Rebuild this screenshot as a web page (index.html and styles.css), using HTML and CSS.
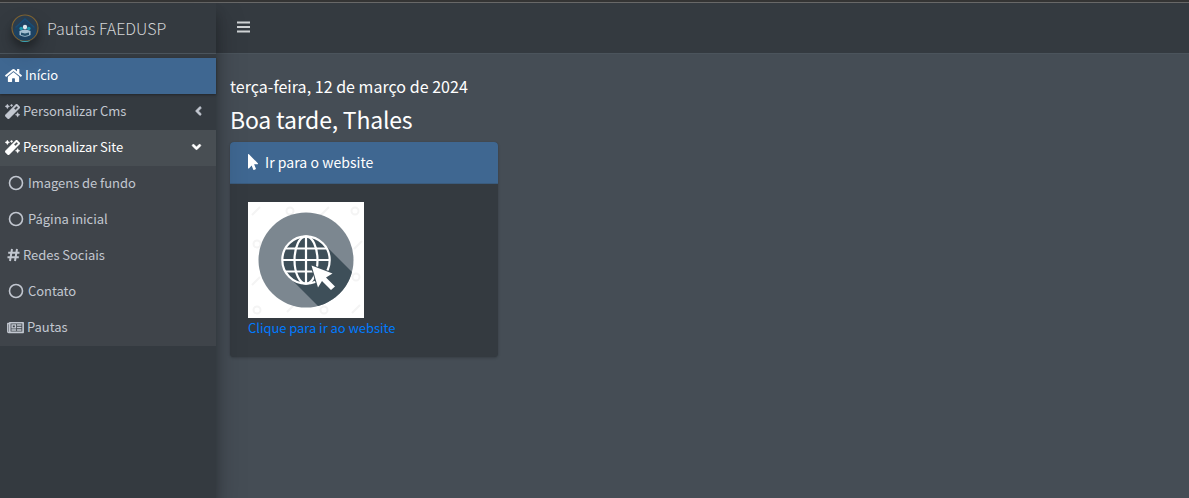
FILE: index.html
```html
<!DOCTYPE html>
<html lang="pt-br">
<head>
<meta charset="utf-8">
<title>Pautas FAEDUSP</title>
<link rel="stylesheet" href="styles.css">
</head>
<body>
<svg class="defs" width="0" height="0">
  <symbol id="magic" viewBox="0 0 512 512"><path d="M224 96l16-32 32-16-32-16-16-32-16 32-32 16 32 16 16 32zM80 160l26.66-53.33L160 80l-53.34-26.67L80 0 53.34 53.33 0 80l53.34 26.67L80 160zm352 128l-26.66 53.33L352 368l53.34 26.67L432 448l26.66-53.33L512 368l-53.34-26.67L432 288zm70.62-193.77L417.77 9.38C411.53 3.12 403.34 0 395.15 0c-8.19 0-16.38 3.12-22.63 9.38L9.38 372.52c-12.5 12.5-12.5 32.76 0 45.25l84.85 84.85c6.25 6.25 14.44 9.37 22.62 9.37 8.19 0 16.38-3.12 22.63-9.37l363.14-363.15c12.5-12.48 12.5-32.75 0-45.24zM359.45 203.46l-50.91-50.91 86.6-86.6 50.91 50.91-86.6 86.6z"/></symbol>
  <symbol id="angle" viewBox="0 0 256 512"><path d="M31.7 239l136-136c9.4-9.4 24.6-9.4 33.9 0l22.6 22.6c9.4 9.4 9.4 24.6 0 33.9L127.9 256l96.4 96.4c9.4 9.4 9.4 24.6 0 33.9L201.7 409c-9.4 9.4-24.6 9.4-33.9 0l-136-136c-9.5-9.4-9.5-24.6-.1-34z"/></symbol>
  <symbol id="circle" viewBox="0 0 16 16"><circle cx="8" cy="8" r="6.500" fill="none" stroke="currentColor" stroke-width="1.600"/></symbol>
</svg>
<div class="wrapper">
  <aside class="sidebar">
    <a class="brand">
      <svg class="brand-logo" viewBox="0 0 28 28">
        <circle cx="14" cy="14" r="13" fill="#2b3d4e" stroke="#80632f" stroke-width="1.100"/>
        <path d="M3 15L14 4l11 11v5a12.500 12.500 0 0 1-22 0z" fill="#1d4262"/>
        <path d="M4.500 13.500L14 5l9.500 8.500" fill="none" stroke="#184d75" stroke-width="1.500"/>
        <circle cx="10.200" cy="14.500" r="1.800" fill="#1d9bb0"/><circle cx="17.800" cy="14.500" r="1.800" fill="#1d9bb0"/>
        <circle cx="14" cy="13" r="2.200" fill="#dce8ee"/>
        <path d="M8.500 17q5.500-3 11 0v4q-5.500 3.500-11 0z" fill="#a5c0d2"/>
        <path d="M10 18.500l4 1 4-1v2.500l-4 1-4-1z" fill="#27536f"/>
        <path d="M9 27q5 1.300 10 0" fill="none" stroke="#39a6b5" stroke-width="1.200"/>
      </svg>
      <span class="brand-text">Pautas FAEDUSP</span>
    </a>
    <nav class="menu">
      <a class="item active"><svg class="ico home" viewBox="0 0 576 512"><path d="M280.37 148.26L96 300.11V464a16 16 0 0 0 16 16l112.06-.29a16 16 0 0 0 15.92-16V368a16 16 0 0 1 16-16h64a16 16 0 0 1 16 16v95.64a16 16 0 0 0 16 16.05L464 480a16 16 0 0 0 16-16V300L295.67 148.26a12.19 12.19 0 0 0-15.3 0zM571.6 251.47L488 182.56V44.05a12 12 0 0 0-12-12h-56a12 12 0 0 0-12 12v72.61L318.47 43a48 48 0 0 0-61 0L4.34 251.47a12 12 0 0 0-1.6 16.9l25.5 31A12 12 0 0 0 45.15 301l235.22-193.74a12.19 12.19 0 0 1 15.3 0L530.9 301a12 12 0 0 0 16.9-1.6l25.5-31a12 12 0 0 0-1.7-16.93z"/></svg><span class="label">Início</span></a>
      <a class="item"><svg class="ico magic"><use href="#magic"/></svg><span class="label">Personalizar Cms</span><svg class="angle"><use href="#angle"/></svg></a>
      <a class="item open"><svg class="ico magic"><use href="#magic"/></svg><span class="label">Personalizar Site</span><svg class="angle down"><use href="#angle"/></svg></a>
      <div class="tree">
        <a class="item"><svg class="ico circle"><use href="#circle"/></svg><span class="label">Imagens de fundo</span></a>
        <a class="item"><svg class="ico circle"><use href="#circle"/></svg><span class="label">Página inicial</span></a>
        <a class="item"><svg class="ico hash" viewBox="0 0 13 14"><path d="M5 1L3 13M10 1L8 13M1.200 4.700h11.300M.5 9.300h11.300" fill="none" stroke="currentColor" stroke-width="2"/></svg><span class="label">Redes Sociais</span></a>
        <a class="item"><svg class="ico circle"><use href="#circle"/></svg><span class="label">Contato</span></a>
        <a class="item"><svg class="ico news" viewBox="0 0 576 512"><path fill-rule="evenodd" d="M552 64H88c-13 0-24 11-24 32H24C11 96 0 107 0 120v272c0 31 25 56 56 56h496c13 0 24-11 24-24V88c0-13-11-24-24-24zM48 392V144h16v248c0 10-16 10-16 0zm72 0V120h400v272zM148 144h164v144H148zm48 40v60h68v-60zM148 316h164v52H148zM340 144h152v52H340zm0 86h152v52H340zm0 86h152v52H340z"/></svg><span class="label">Pautas</span></a>
      </div>
    </nav>
  </aside>
  <div class="main">
    <header class="navbar"><svg class="bars" viewBox="0 0 13 12"><path d="M.5 1.500h12M.5 6h12M.5 10.500h12" stroke="currentColor" stroke-width="2.200" stroke-linecap="round"/></svg></header>
    <main class="content">
      <h5 class="date">terça-feira, 12 de março de 2024</h5>
      <h3 class="greeting">Boa tarde, Thales</h3>
      <section class="card">
        <div class="card-header"><svg class="pointer" viewBox="0 0 320 512"><path d="M302.189 329.126H196.105l55.831 135.993c3.889 9.428-.555 19.999-9.444 23.999l-49.165 21.427c-9.165 4-19.443-.571-23.332-9.714l-53.053-129.136-86.664 89.138C18.729 472.71 0 463.554 0 447.977V18.299C0 1.899 19.921-6.096 30.277 5.443l284.412 292.542c11.472 11.179 3.007 31.141-12.5 31.141z"/></svg><span class="label">Ir para o website</span></div>
        <div class="card-body">
          <svg class="globe" viewBox="0 0 116 116">
            <rect width="116" height="116" fill="#fff"/>
            <g fill="none" stroke="#f4f4f4" stroke-width="2">
              <path d="M4 13l8-8M73 13l8-8M4 83l8-8M39 110l8-8M104 111l8-8M106 47l8-8"/>
              <circle cx="42" cy="9" r="3.500"/><circle cx="107" cy="9" r="3.500"/><circle cx="9" cy="42" r="3.500"/><circle cx="108" cy="75" r="3.500"/><circle cx="9" cy="108" r="3.500"/><circle cx="76" cy="108" r="3.500"/>
            </g>
            <clipPath id="disc"><circle cx="58" cy="58" r="47.500"/></clipPath>
            <circle cx="58" cy="58" r="47.500" fill="#7c8790"/>
            <g clip-path="url(#disc)"><path d="M75 41l45 45v34H86L41 75z" fill="#3e4f59"/></g>
            <circle cx="58" cy="58" r="23.700" fill="#3e4f59"/>
            <g fill="none" stroke="#fff" stroke-width="2.200">
              <circle cx="58" cy="58" r="23.700"/><ellipse cx="58" cy="58" rx="11.500" ry="23.700"/>
              <path d="M58 34v48M34 58h48M38 46.500h40M38 69.500h40"/>
            </g>
            <path d="M63.500 63.500l21 8-6.500 4 9 9-4 3.500-9-9-4 6.500z" fill="#fff" stroke="#3e4f59" stroke-width="2" paint-order="stroke"/>
          </svg>
          <a class="link">Clique para ir ao website</a>
        </div>
      </section>
    </main>
  </div>
</div>
</body>
</html>
```
FILE: styles.css
```css
* { box-sizing: border-box; }
body {
  margin: 0;
  height: 498px;
  overflow: hidden;
  background: #454d55;
  border-top: 2px solid #343434;
  font-family: "Noto Sans CJK SC", "Noto Sans", sans-serif;
  font-size: 13px;
  color: #fff;
}
.defs { position: absolute; }
svg { flex: none; fill: currentColor; }
.wrapper { display: flex; height: 496px; border-top: 1px solid #686868; }
.sidebar {
  position: relative;
  z-index: 2;
  width: 216px;
  background: #343a40;
  box-shadow: 0 14px 28px rgba(0,0,0,.25), 0 10px 10px rgba(0,0,0,.22);
}
.brand {
  display: flex;
  align-items: center;
  height: 51px;
  padding: 0 0 0 11px;
  border-bottom: 1px solid #4b545c;
  color: #d2d4d6;
  font-size: 16px;
  font-weight: 300;
}
.brand-logo {
  width: 28px;
  height: 28px;
  margin: 0 8px 1px 0;
  border-radius: 50%;
  box-shadow: 0 10px 20px rgba(0,0,0,.19), 0 6px 6px rgba(0,0,0,.23);
}
.menu { padding-top: 4px; }
.item {
  display: flex;
  align-items: center;
  height: 36px;
  padding: 0 0 2px 5px;
  color: #c2c7d0;
  letter-spacing: -.05px;
  white-space: nowrap;
}
.label { padding-bottom: 2px; }
.active { background: #3f6791; color: #fff; box-shadow: 0 1px 3px rgba(0,0,0,.12), 0 1px 2px rgba(0,0,0,.24); }
.open { background: #484e53; color: #fff; }
.tree { background: #3f444a; }
.ico { height: 14px; margin-right: 3px; }
.home { width: 17px; height: 15px; margin-right: 3px; }
.magic { width: 15px; height: 15px; stroke: currentColor; stroke-width: 12px; }
.circle { width: 16px; height: 16px; margin: 0 4px 0 3px; }
.hash { width: 13px; margin-left: 2px; }
.news { width: 17px; height: 15px; margin-left: 2px; margin-right: 3px; }
.angle { width: 7px; height: 14px; margin: 0 14px 0 auto; stroke: currentColor; stroke-width: 20px; }
.down { transform: rotate(-90deg); margin-right: 16px; }
.main { flex: 1; }
.navbar {
  display: flex;
  align-items: center;
  height: 51px;
  padding-left: 21px;
  background: #343a40;
  border-bottom: 1px solid #4b545c;
  color: #d0d3d5;
}
.bars { width: 13px; height: 12px; margin-bottom: 2px; }
.content { padding: 21px 14px; }
.date { margin: 0 0 7px; font-size: 16px; font-weight: 400; line-height: 22px; letter-spacing: .03px; }
.greeting { margin: 0 0 8px; font-size: 23px; font-weight: 400; line-height: 30px; letter-spacing: -.2px; }
.card {
  width: 268px;
  height: 215px;
  background: #343a40;
  border-radius: 4px;
  box-shadow: 0 0 1px rgba(0,0,0,.13), 0 1px 3px rgba(0,0,0,.2);
}
.card-header {
  display: flex;
  align-items: center;
  gap: 7px;
  height: 42px;
  padding-left: 18px;
  background: #3f6791;
  border-radius: 4px 4px 0 0;
  border-bottom: 1px solid #3a5b7d;
  font-size: 14px;
  letter-spacing: .05px;
}
.pointer { width: 10px; height: 16px; margin-bottom: 2px; }
.card-body { padding: 18px; }
.globe { display: block; width: 116px; height: 116px; }
.link { display: block; line-height: 19px; letter-spacing: -.05px; color: #007bff; }
```
